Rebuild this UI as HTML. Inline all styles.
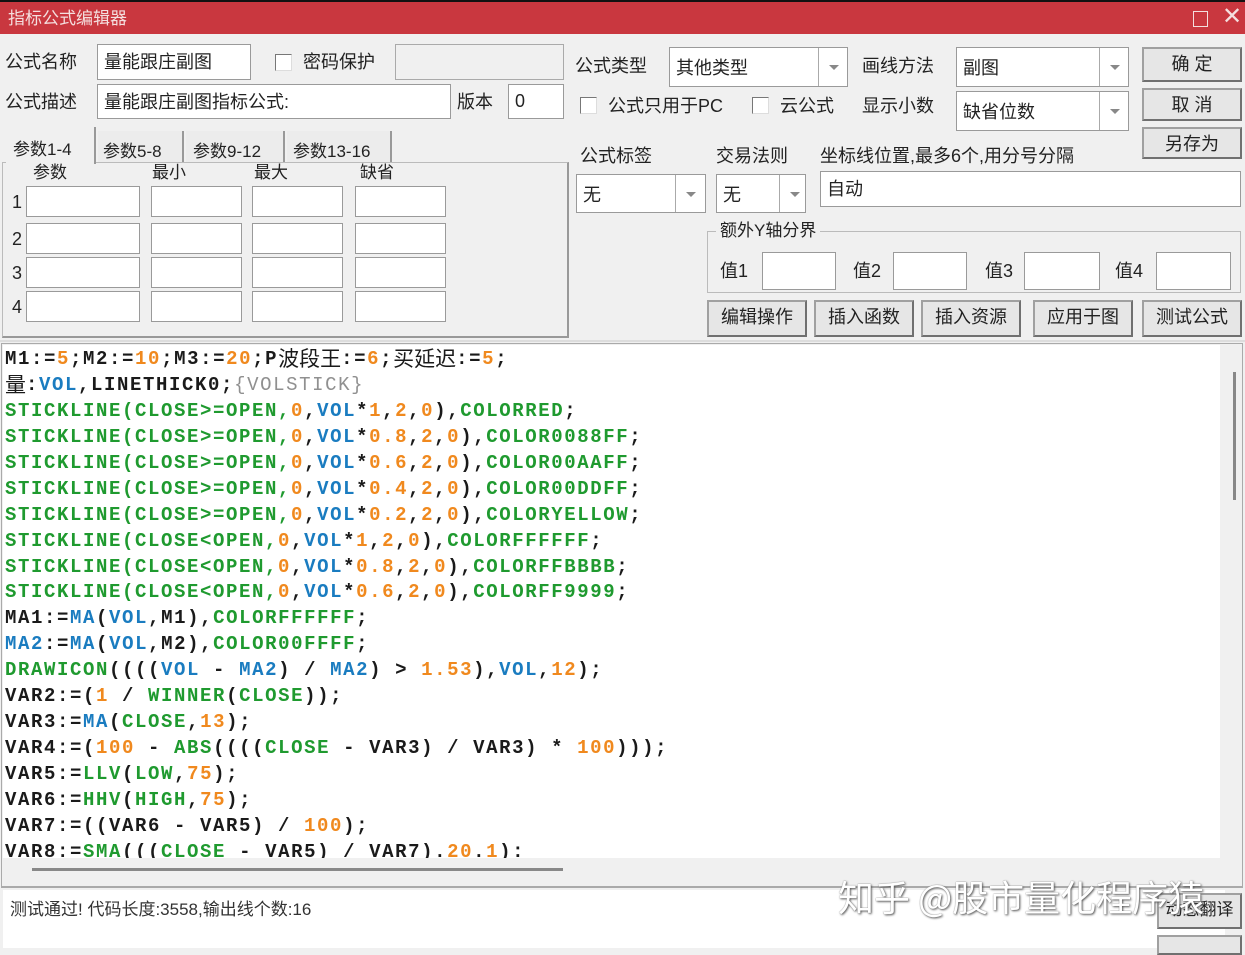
<!DOCTYPE html>
<html><head><meta charset="utf-8"><style>
*{margin:0;padding:0;box-sizing:border-box}
body{width:1245px;height:948px;overflow:hidden;background:#f0f0f0;position:relative;font-family:"Liberation Sans","Noto Sans CJK SC",sans-serif;font-size:18px;color:#222}
.a{position:absolute;white-space:nowrap;line-height:1}
.in{position:absolute;background:#fff;border:1px solid #9a9a9a}
.cb{position:absolute;width:17px;height:17px;background:#fff;border:1px solid #777;border-right-color:#ddd;border-bottom-color:#ddd}
.btn{position:absolute;background:#e6e6e6;border:2px solid #707070;border-top-color:#a0a0a0;border-left-color:#a0a0a0;text-align:center;font-size:18px;line-height:30px;color:#222}
.combo{position:absolute;background:#fff;border:1px solid #9a9a9a}
.combo .ar{position:absolute;right:0;top:0;bottom:0;border-left:1px solid #aaa;width:29px}
.combo .ar:after{content:"";position:absolute;left:10px;top:50%;margin-top:-2px;border-left:5px solid transparent;border-right:5px solid transparent;border-top:5px solid #888}
.combo span{position:absolute;left:6px;top:50%;transform:translateY(-50%);font-size:18px}
#code{position:absolute;left:3px;top:345px;width:1217px;height:513px;background:#fff;overflow:hidden;padding-top:2px}
#code div{font-family:"Liberation Mono","Noto Sans CJK SC",monospace;font-weight:bold;font-size:19px;letter-spacing:1.6px;height:25.95px;line-height:25.95px;color:#1a1a1a;padding-left:2px;white-space:pre;overflow:visible}
.b{color:#1a7cc0}.g{color:#1f9a2f}.o{color:#f0891e}.gr{color:#909090;font-weight:normal}
.cj{font-family:"Noto Sans CJK SC",sans-serif;font-weight:normal;font-size:21px;letter-spacing:0;line-height:20px;display:inline-block;vertical-align:top;margin-top:1px}
.tab{position:absolute;top:131px;height:31px;border-right:2px solid #999}
.tt{position:absolute;top:137px;font-size:17px}
</style></head><body>
<div class="a" style="left:0;top:0;width:1245px;height:2px;background:#111"></div>
<div class="a" style="left:0;top:2px;width:1245px;height:32px;background:#c9373f"></div>
<div class="a" style="left:8px;top:10px;color:#f4dede;font-size:17px">指标公式编辑器</div>
<div class="a" style="left:1193px;top:11px;width:15px;height:16px;border:1.5px solid #f4dede"></div>
<div class="a" style="left:1222px;top:5px;color:#f4dede;font-size:24px;font-weight:300">✕</div>

<div class="a" style="left:5px;top:53px">公式名称</div>
<div class="in" style="left:97px;top:44px;width:154px;height:36px"></div>
<div class="a" style="left:104px;top:53px">量能跟庄副图</div>
<div class="cb" style="left:275px;top:54px"></div>
<div class="a" style="left:303px;top:53px">密码保护</div>
<div class="in" style="left:395px;top:44px;width:169px;height:36px;background:#f0f0f0;border-color:#aaa"></div>

<div class="a" style="left:5px;top:93px">公式描述</div>
<div class="in" style="left:97px;top:84px;width:354px;height:35px"></div>
<div class="a" style="left:104px;top:93px">量能跟庄副图指标公式:</div>
<div class="a" style="left:457px;top:93px">版本</div>
<div class="in" style="left:508px;top:84px;width:56px;height:35px"></div>
<div class="a" style="left:515px;top:92px">0</div>

<div class="a" style="left:575px;top:57px">公式类型</div>
<div class="combo" style="left:669px;top:47px;width:179px;height:40px"><span>其他类型</span><div class="ar"></div></div>
<div class="a" style="left:862px;top:57px">画线方法</div>
<div class="combo" style="left:956px;top:47px;width:173px;height:40px"><span>副图</span><div class="ar"></div></div>
<div class="btn" style="left:1142px;top:47px;width:100px;height:35px">确 定</div>

<div class="cb" style="left:580px;top:97px"></div>
<div class="a" style="left:608px;top:97px">公式只用于PC</div>
<div class="cb" style="left:752px;top:97px"></div>
<div class="a" style="left:780px;top:97px">云公式</div>
<div class="a" style="left:862px;top:97px">显示小数</div>
<div class="combo" style="left:956px;top:91px;width:173px;height:40px"><span>缺省位数</span><div class="ar"></div></div>
<div class="btn" style="left:1142px;top:88px;width:100px;height:33px">取 消</div>
<div class="btn" style="left:1142px;top:127px;width:100px;height:32px">另存为</div>

<!-- tabs -->
<div class="a" style="left:2px;top:162px;width:567px;height:176px;border:1px solid #bbb;border-right:2px solid #999;border-bottom:2px solid #999"></div>
<div class="a" style="left:6px;top:127px;width:90px;height:37px;background:#f0f0f0;border-right:2px solid #999"></div>
<div class="tt" style="left:13px;top:135px">参数1-4</div>
<div class="tab" style="left:98px;width:86px;background:#ececec"></div>
<div class="tt" style="left:103px">参数5-8</div>
<div class="tab" style="left:186px;width:99px;background:#ececec"></div>
<div class="tt" style="left:193px">参数9-12</div>
<div class="tab" style="left:287px;width:105px;background:#ececec"></div>
<div class="tt" style="left:293px">参数13-16</div>
<div class="a" style="left:33px;top:164px;font-size:17px">参数</div>
<div class="a" style="left:152px;top:164px;font-size:17px">最小</div>
<div class="a" style="left:254px;top:164px;font-size:17px">最大</div>
<div class="a" style="left:360px;top:164px;font-size:17px">缺省</div>
<div class="a" style="left:12px;top:193px">1</div><div class="a" style="left:12px;top:230px">2</div><div class="a" style="left:12px;top:264px">3</div><div class="a" style="left:12px;top:298px">4</div>
<div class="in" style="left:26px;top:186px;width:114px;height:31px"></div><div class="in" style="left:151px;top:186px;width:91px;height:31px"></div><div class="in" style="left:252px;top:186px;width:91px;height:31px"></div><div class="in" style="left:355px;top:186px;width:91px;height:31px"></div>
<div class="in" style="left:26px;top:223px;width:114px;height:31px"></div><div class="in" style="left:151px;top:223px;width:91px;height:31px"></div><div class="in" style="left:252px;top:223px;width:91px;height:31px"></div><div class="in" style="left:355px;top:223px;width:91px;height:31px"></div>
<div class="in" style="left:26px;top:257px;width:114px;height:31px"></div><div class="in" style="left:151px;top:257px;width:91px;height:31px"></div><div class="in" style="left:252px;top:257px;width:91px;height:31px"></div><div class="in" style="left:355px;top:257px;width:91px;height:31px"></div>
<div class="in" style="left:26px;top:291px;width:114px;height:31px"></div><div class="in" style="left:151px;top:291px;width:91px;height:31px"></div><div class="in" style="left:252px;top:291px;width:91px;height:31px"></div><div class="in" style="left:355px;top:291px;width:91px;height:31px"></div>

<div class="a" style="left:580px;top:147px">公式标签</div>
<div class="combo" style="left:576px;top:174px;width:130px;height:39px"><span>无</span><div class="ar" style="width:30px"></div></div>
<div class="a" style="left:716px;top:147px">交易法则</div>
<div class="combo" style="left:716px;top:174px;width:90px;height:39px"><span>无</span><div class="ar" style="width:26px"></div></div>
<div class="a" style="left:820px;top:147px">坐标线位置,最多6个,用分号分隔</div>
<div class="in" style="left:820px;top:171px;width:421px;height:36px"></div>
<div class="a" style="left:827px;top:180px">自动</div>

<div class="a" style="left:707px;top:231px;width:534px;height:62px;border:1px solid #bbb"></div>
<div class="a" style="left:716px;top:222px;background:#f0f0f0;padding:0 4px;font-size:17px">额外Y轴分界</div>
<div class="a" style="left:720px;top:262px">值1</div><div class="in" style="left:762px;top:252px;width:74px;height:38px"></div>
<div class="a" style="left:853px;top:262px">值2</div><div class="in" style="left:893px;top:252px;width:74px;height:38px"></div>
<div class="a" style="left:985px;top:262px">值3</div><div class="in" style="left:1024px;top:252px;width:76px;height:38px"></div>
<div class="a" style="left:1115px;top:262px">值4</div><div class="in" style="left:1156px;top:252px;width:75px;height:38px"></div>

<div class="btn" style="left:707px;top:300px;width:100px;height:37px">编辑操作</div>
<div class="btn" style="left:814px;top:300px;width:100px;height:37px">插入函数</div>
<div class="btn" style="left:921px;top:300px;width:100px;height:37px">插入资源</div>
<div class="btn" style="left:1033px;top:300px;width:100px;height:37px">应用于图</div>
<div class="btn" style="left:1142px;top:300px;width:100px;height:37px">测试公式</div>

<div class="a" style="left:0;top:340px;width:1245px;height:2px;background:#ddd"></div>
<div class="a" style="left:1px;top:343px;width:1242px;height:545px;border:1px solid #aaa;background:#f0f0f0"></div>
<div id="code">
<div>M1:=<span class="o">5</span>;M2:=<span class="o">10</span>;M3:=<span class="o">20</span>;P<span class="cj">波段王</span>:=<span class="o">6</span>;<span class="cj">买延迟</span>:=<span class="o">5</span>;</div>
<div><span class="cj">量</span>:<span class="b">VOL</span>,LINETHICK0;<span class="gr">{VOLSTICK}</span></div>
<div><span class="g">STICKLINE(CLOSE&gt;=OPEN,</span><span class="o">0</span>,<span class="b">VOL</span>*<span class="o">1</span>,<span class="o">2</span>,<span class="o">0</span>),<span class="g">COLORRED</span>;</div>
<div><span class="g">STICKLINE(CLOSE&gt;=OPEN,</span><span class="o">0</span>,<span class="b">VOL</span>*<span class="o">0.8</span>,<span class="o">2</span>,<span class="o">0</span>),<span class="g">COLOR0088FF</span>;</div>
<div><span class="g">STICKLINE(CLOSE&gt;=OPEN,</span><span class="o">0</span>,<span class="b">VOL</span>*<span class="o">0.6</span>,<span class="o">2</span>,<span class="o">0</span>),<span class="g">COLOR00AAFF</span>;</div>
<div><span class="g">STICKLINE(CLOSE&gt;=OPEN,</span><span class="o">0</span>,<span class="b">VOL</span>*<span class="o">0.4</span>,<span class="o">2</span>,<span class="o">0</span>),<span class="g">COLOR00DDFF</span>;</div>
<div><span class="g">STICKLINE(CLOSE&gt;=OPEN,</span><span class="o">0</span>,<span class="b">VOL</span>*<span class="o">0.2</span>,<span class="o">2</span>,<span class="o">0</span>),<span class="g">COLORYELLOW</span>;</div>
<div><span class="g">STICKLINE(CLOSE&lt;OPEN,</span><span class="o">0</span>,<span class="b">VOL</span>*<span class="o">1</span>,<span class="o">2</span>,<span class="o">0</span>),<span class="g">COLORFFFFFF</span>;</div>
<div><span class="g">STICKLINE(CLOSE&lt;OPEN,</span><span class="o">0</span>,<span class="b">VOL</span>*<span class="o">0.8</span>,<span class="o">2</span>,<span class="o">0</span>),<span class="g">COLORFFBBBB</span>;</div>
<div><span class="g">STICKLINE(CLOSE&lt;OPEN,</span><span class="o">0</span>,<span class="b">VOL</span>*<span class="o">0.6</span>,<span class="o">2</span>,<span class="o">0</span>),<span class="g">COLORFF9999</span>;</div>
<div>MA1:=<span class="b">MA</span>(<span class="b">VOL</span>,M1),<span class="g">COLORFFFFFF</span>;</div>
<div><span class="b">MA2</span>:=<span class="b">MA</span>(<span class="b">VOL</span>,M2),<span class="g">COLOR00FFFF</span>;</div>
<div><span class="g">DRAWICON</span>((((<span class="b">VOL</span> - <span class="b">MA2</span>) / <span class="b">MA2</span>) &gt; <span class="o">1.53</span>),<span class="b">VOL</span>,<span class="o">12</span>);</div>
<div>VAR2:=(<span class="o">1</span> / <span class="g">WINNER</span>(<span class="g">CLOSE</span>));</div>
<div>VAR3:=<span class="b">MA</span>(<span class="g">CLOSE</span>,<span class="o">13</span>);</div>
<div>VAR4:=(<span class="o">100</span> - <span class="g">ABS</span>((((<span class="g">CLOSE</span> - VAR3) / VAR3) * <span class="o">100</span>)));</div>
<div>VAR5:=<span class="g">LLV</span>(<span class="g">LOW</span>,<span class="o">75</span>);</div>
<div>VAR6:=<span class="g">HHV</span>(<span class="g">HIGH</span>,<span class="o">75</span>);</div>
<div>VAR7:=((VAR6 - VAR5) / <span class="o">100</span>);</div>
<div>VAR8:=<span class="g">SMA</span>(((<span class="g">CLOSE</span> - VAR5) / VAR7).<span class="o">20</span>.<span class="o">1</span>):</div>
</div>
<div class="a" style="left:1233px;top:372px;width:3px;height:128px;background:#888"></div>
<div class="a" style="left:32px;top:868px;width:531px;height:3px;background:#888"></div>

<div class="a" style="left:1px;top:886px;width:1242px;height:62px;border-top:2px solid #aaa;background:#f0f0f0"></div>
<div class="a" style="left:3px;top:890px;width:1222px;height:58px;background:#fff"></div>
<div class="a" style="left:10px;top:901px;font-size:17px;color:#333">测试通过! 代码长度:3558,输出线个数:16</div>
<div class="btn" style="left:1157px;top:893px;width:85px;height:36px;font-size:17px">动态翻译</div>
<div class="btn" style="left:1157px;top:935px;width:85px;height:20px"></div>
<div class="a" style="left:838px;top:878px;font-size:36px;color:#fff;text-shadow:1px 1px 2px #555,0 0 1px #777;font-family:'Noto Sans CJK SC',sans-serif">知乎 @股市量化程序猿</div>
</body></html>
